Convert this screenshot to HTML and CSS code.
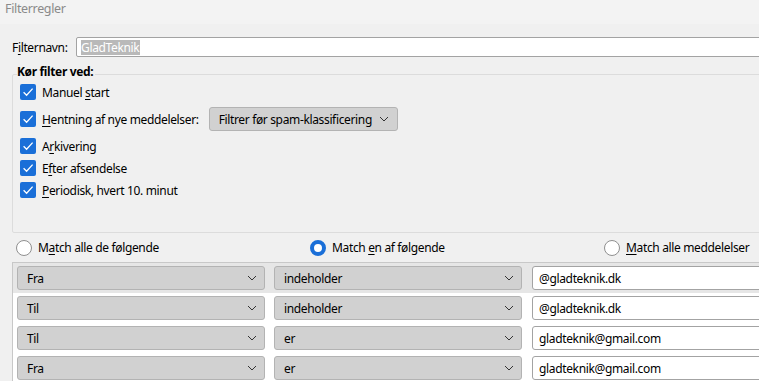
FILE: index.html
```html
<!DOCTYPE html>
<html lang="da">
<head>
    <meta charset="UTF-8">
    <title>Filterregler</title>
    <link rel="stylesheet" href="styles.css">
</head>
<body>
    <div class="titlebar">Filterregler</div>
    <div class="dialog">
        <div class="name-row">
            <label class="name-label">F<u>i</u>lternavn:</label>
            <div class="text-field name-field"><span class="selection">GladTeknik</span></div>
        </div>

        <fieldset class="group">
            <legend>Kør filter ved:</legend>
            <div class="check-list">
                <div class="check-row">
                    <span class="check"><svg viewBox="0 0 16 16"><path d="M3.6 8.2 L6.6 11.2 L12.6 4.6"/></svg></span>
                    <span>Manuel <u>s</u>tart</span>
                </div>
                <div class="check-row tall">
                    <span class="check"><svg viewBox="0 0 16 16"><path d="M3.6 8.2 L6.6 11.2 L12.6 4.6"/></svg></span>
                    <span><u>H</u>entning af nye meddelelser:</span>
                    <div class="menu-button">Filtrer før spam-klassificering <svg class="chevron" viewBox="0 0 10 6"><path d="M1 1 L5 5 L9 1"/></svg></div>
                </div>
                <div class="check-row">
                    <span class="check"><svg viewBox="0 0 16 16"><path d="M3.6 8.2 L6.6 11.2 L12.6 4.6"/></svg></span>
                    <span>A<u>r</u>kivering</span>
                </div>
                <div class="check-row">
                    <span class="check"><svg viewBox="0 0 16 16"><path d="M3.6 8.2 L6.6 11.2 L12.6 4.6"/></svg></span>
                    <span>E<u>f</u>ter afsendelse</span>
                </div>
                <div class="check-row">
                    <span class="check"><svg viewBox="0 0 16 16"><path d="M3.6 8.2 L6.6 11.2 L12.6 4.6"/></svg></span>
                    <span><u>P</u>eriodisk, hvert 10. minut</span>
                </div>
            </div>
        </fieldset>

        <div class="radio-row">
            <div class="radio-item"><span class="radio"></span><span>M<u>a</u>tch alle de følgende</span></div>
            <div class="radio-item"><span class="radio checked"></span><span>Match <u>e</u>n af følgende</span></div>
            <div class="radio-item"><span class="radio"></span><span><u>M</u>atch alle meddelelser</span></div>
        </div>

        <div class="rule-list">
            <div class="rule-row selected">
                <div class="select">Fra <svg class="chevron" viewBox="0 0 10 6"><path d="M1 1 L5 5 L9 1"/></svg></div>
                <div class="select">indeholder <svg class="chevron" viewBox="0 0 10 6"><path d="M1 1 L5 5 L9 1"/></svg></div>
                <div class="text-field value">@gladteknik.dk</div>
            </div>
            <div class="rule-row">
                <div class="select">Til <svg class="chevron" viewBox="0 0 10 6"><path d="M1 1 L5 5 L9 1"/></svg></div>
                <div class="select">indeholder <svg class="chevron" viewBox="0 0 10 6"><path d="M1 1 L5 5 L9 1"/></svg></div>
                <div class="text-field value">@gladteknik.dk</div>
            </div>
            <div class="rule-row">
                <div class="select">Til <svg class="chevron" viewBox="0 0 10 6"><path d="M1 1 L5 5 L9 1"/></svg></div>
                <div class="select">er <svg class="chevron" viewBox="0 0 10 6"><path d="M1 1 L5 5 L9 1"/></svg></div>
                <div class="text-field value">gladteknik@gmail.com</div>
            </div>
            <div class="rule-row">
                <div class="select">Fra <svg class="chevron" viewBox="0 0 10 6"><path d="M1 1 L5 5 L9 1"/></svg></div>
                <div class="select">er <svg class="chevron" viewBox="0 0 10 6"><path d="M1 1 L5 5 L9 1"/></svg></div>
                <div class="text-field value">gladteknik@gmail.com</div>
            </div>
        </div>
    </div>
</body>
</html>
```

FILE: styles.css
```css
:root {
    --bg: #f0f0f0;
    --title-bg: #f3f3f3;
    --text: #000000;
    --muted: #8a8a8a;
    --accent: #1a6fd8;
    --field-border: #a3a3a3;
    --button-bg: #d1d1d1;
    --button-border: #b3b3b3;
    --group-border: #dcdcdc;
}

* {
    box-sizing: border-box;
}

body {
    margin: 0;
    overflow: hidden;
    background-color: var(--bg);
    color: var(--text);
    font-family: "Noto Sans", "Liberation Sans", sans-serif;
    font-size: 12px;
    letter-spacing: -0.35px;
}

u {
    text-decoration-thickness: 1px;
    text-underline-offset: 2px;
}

.titlebar {
    height: 24px;
    padding-left: 5px;
    line-height: 18px;
    font-size: 12.5px;
    background-color: var(--title-bg);
    color: var(--muted);
}

.dialog {
    width: 900px;
    padding-left: 12px;
}

/* filter name */
.name-row {
    display: flex;
    align-items: center;
    margin-top: 13px;
    height: 20px;
}

.name-label {
    width: 64px;
}

.text-field {
    background-color: #ffffff;
    border: 1px solid var(--field-border);
    border-radius: 2px;
    display: flex;
    align-items: center;
}

.name-field {
    flex: 1;
    height: 20px;
    padding-left: 4px;
}

.selection {
    background-color: #b9b9b9;
    color: #ffffff;
    line-height: 15px;
    padding-right: 1px;
}

/* run filter group */
.group {
    margin: 8px 0 0 0;
    padding: 0 0 31px 7px;
    border: 1px solid var(--group-border);
    border-radius: 2px;
}

.group legend {
    margin-left: -3px;
    padding: 0 2px 4px 0;
    font-weight: bold;
    line-height: 14px;
}

.check-list {
    display: flex;
    flex-direction: column;
    margin-top: -2px;
}

.check-row {
    display: flex;
    align-items: center;
    height: 22px;
}

.check-row.tall {
    height: 32px;
}

.check {
    width: 16px;
    height: 16px;
    margin-right: 6px;
    border-radius: 2px;
    background-color: var(--accent);
    display: flex;
}

.check svg {
    width: 16px;
    height: 16px;
    fill: none;
    stroke: #ffffff;
    stroke-width: 1.3;
}

.menu-button {
    display: flex;
    align-items: center;
    height: 24px;
    margin-left: 10px;
    padding: 0 8px 0 9px;
    background-color: var(--button-bg);
    border: 1px solid var(--button-border);
    border-radius: 3px;
}

.chevron {
    width: 10px;
    height: 6px;
    fill: none;
    stroke: #333333;
    stroke-width: 1;
}

.menu-button .chevron {
    margin-left: 7px;
}

/* match radios */
.radio-row {
    display: flex;
    align-items: center;
    height: 29px;
    padding-left: 4px;
}

.radio-item {
    display: flex;
    align-items: center;
    width: 294px;
}

.radio {
    width: 16px;
    height: 16px;
    margin-right: 6px;
    border-radius: 50%;
    border: 1px solid #8f8f8f;
    background-color: #ffffff;
}

.radio.checked {
    border: 4px solid var(--accent);
}

/* rule list */
.rule-list {
    border-top: 1px solid #c8c8c8;
    border-left: 1px solid #c8c8c8;
    background-color: #ffffff;
}

.rule-row {
    display: flex;
    align-items: center;
    height: 30px;
    padding-left: 4px;
    gap: 9px;
}

.rule-row.selected {
    background-color: #e6e6e6;
}

.select {
    display: flex;
    align-items: center;
    justify-content: space-between;
    width: 248px;
    height: 24px;
    padding: 0 7px 0 9px;
    background-color: var(--button-bg);
    border: 1px solid var(--button-border);
    border-radius: 3px;
}

.value {
    flex: 1;
    height: 24px;
    margin-left: 1px;
    padding-left: 6px;
    border-radius: 3px;
}
```
